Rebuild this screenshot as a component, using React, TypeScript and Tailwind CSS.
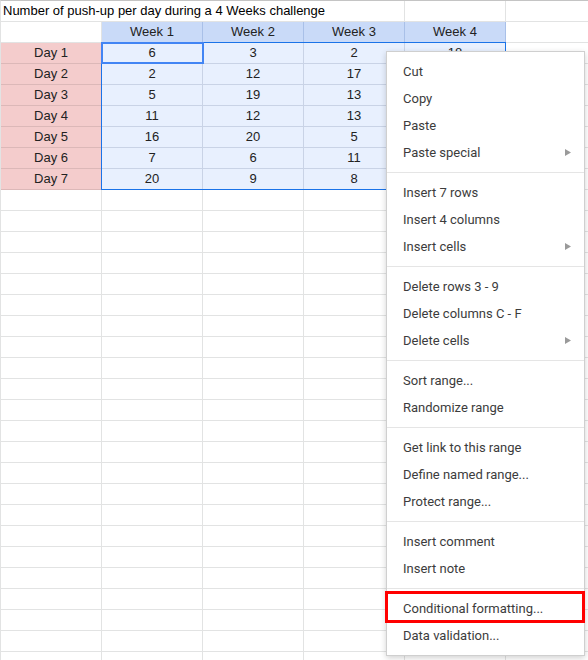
import React from 'react'

const weeks = ['Week 1', 'Week 2', 'Week 3', 'Week 4']

// week 4 values below the first row sit under the context menu
const values: (number | null)[][] = [
  [6, 3, 2, 18],
  [2, 12, 17, null],
  [5, 19, 13, null],
  [11, 12, 13, null],
  [16, 20, 5, null],
  [7, 6, 11, null],
  [20, 9, 8, null],
]

type MenuEntry = { label: string; sub?: boolean; mark?: boolean } | 'sep'

const menu: MenuEntry[] = [
  { label: 'Cut' },
  { label: 'Copy' },
  { label: 'Paste' },
  { label: 'Paste special', sub: true },
  'sep',
  { label: 'Insert 7 rows' },
  { label: 'Insert 4 columns' },
  { label: 'Insert cells', sub: true },
  'sep',
  { label: 'Delete rows 3 - 9' },
  { label: 'Delete columns C - F' },
  { label: 'Delete cells', sub: true },
  'sep',
  { label: 'Sort range...' },
  { label: 'Randomize range' },
  'sep',
  { label: 'Get link to this range' },
  { label: 'Define named range...' },
  { label: 'Protect range...' },
  'sep',
  { label: 'Insert comment' },
  { label: 'Insert note' },
  'sep',
  { label: 'Conditional formatting...', mark: true },
  { label: 'Data validation...' },
]

const Cell = ({ className = '', children }: { className?: string; children?: React.ReactNode }) => (
  <div className={`h-[21px] border-b border-r flex items-center justify-center ${className}`}>
    {children}
  </div>
)

const ContextMenu = () => (
  <div className="absolute left-[386px] top-[51px] w-[199px] bg-white border border-[#cfcfcf] shadow-[0_2px_6px_rgba(0,0,0,0.18)] py-[6px] font-['Roboto',sans-serif] text-[13px] text-[#3c3c3c]">
    {menu.map((m, i) =>
      m === 'sep' ? (
        <div key={i} className="my-[6px] h-px bg-[#e5e5e5]" />
      ) : (
        <div key={i} className="relative h-[27px] pl-4 pr-3 flex items-center justify-between">
          <span>{m.label}</span>
          {m.sub && (
            <svg width="6" height="7" viewBox="0 0 6 7" className="mr-[1px]">
              <path d="M0 0 L6 3.5 L0 7 Z" fill="#9a9a9a" />
            </svg>
          )}
          {m.mark && <div className="absolute -left-[2px] -right-[1px] -top-[4px] -bottom-px border-[3px] border-[#ff0000]" />}
        </div>
      )
    )}
  </div>
)

export default function App() {
  const emptyRows = Array.from({ length: 23 })

  return (
    <div className="relative w-[588px] h-[660px] overflow-hidden bg-white font-['Liberation_Sans',Arial,sans-serif] text-[13px] text-[#000]">
      <div className="grid grid-cols-[101px_101px_101px_101px_101px_1fr] border-t border-l border-t-[#c4c4c4] border-l-[#e2e3e3]">
        {/* row 1 */}
        <div className="col-span-4 h-[21px] border-b border-r border-[#e2e3e3] flex items-center pl-[2px] whitespace-nowrap">
          Number of push-up per day during a 4 Weeks challenge
        </div>
        <Cell className="border-[#e2e3e3]" />
        <Cell className="border-[#e2e3e3] border-r-0" />

        {/* header row */}
        <Cell className="border-[#e2e3e3]" />
        {weeks.map((w) => (
          <Cell key={w} className="bg-[#c9daf8] border-[#a9c0e8] text-[#222]">
            {w}
          </Cell>
        ))}
        <Cell className="border-[#e2e3e3] border-r-0" />

        {/* data rows */}
        {values.map((row, r) => (
          <React.Fragment key={r}>
            <Cell className="bg-[#f4cccc] border-[#dcb8b8] text-[#222]">Day {r + 1}</Cell>
            {row.map((v, c) => (
              <Cell key={c} className="bg-[#e8f0fe] border-[#c9d3e6] text-[#222]">
                {v}
              </Cell>
            ))}
            <Cell className="border-[#e2e3e3] border-r-0" />
          </React.Fragment>
        ))}

        {/* empty rows */}
        {emptyRows.map((_, r) => (
          <React.Fragment key={r}>
            {[0, 1, 2, 3, 4].map((c) => (
              <Cell key={c} className="border-[#e2e3e3]" />
            ))}
            <Cell className="border-[#e2e3e3] border-r-0" />
          </React.Fragment>
        ))}
      </div>

      {/* selection range */}
      <div className="absolute left-[101px] top-[42px] w-[405px] h-[148px] border border-[#1a73e8] pointer-events-none" />
      {/* active cell */}
      <div className="absolute left-[101px] top-[42px] w-[103px] h-[22px] border-2 border-[#4285f4] pointer-events-none" />

      <ContextMenu />
    </div>
  )
}
